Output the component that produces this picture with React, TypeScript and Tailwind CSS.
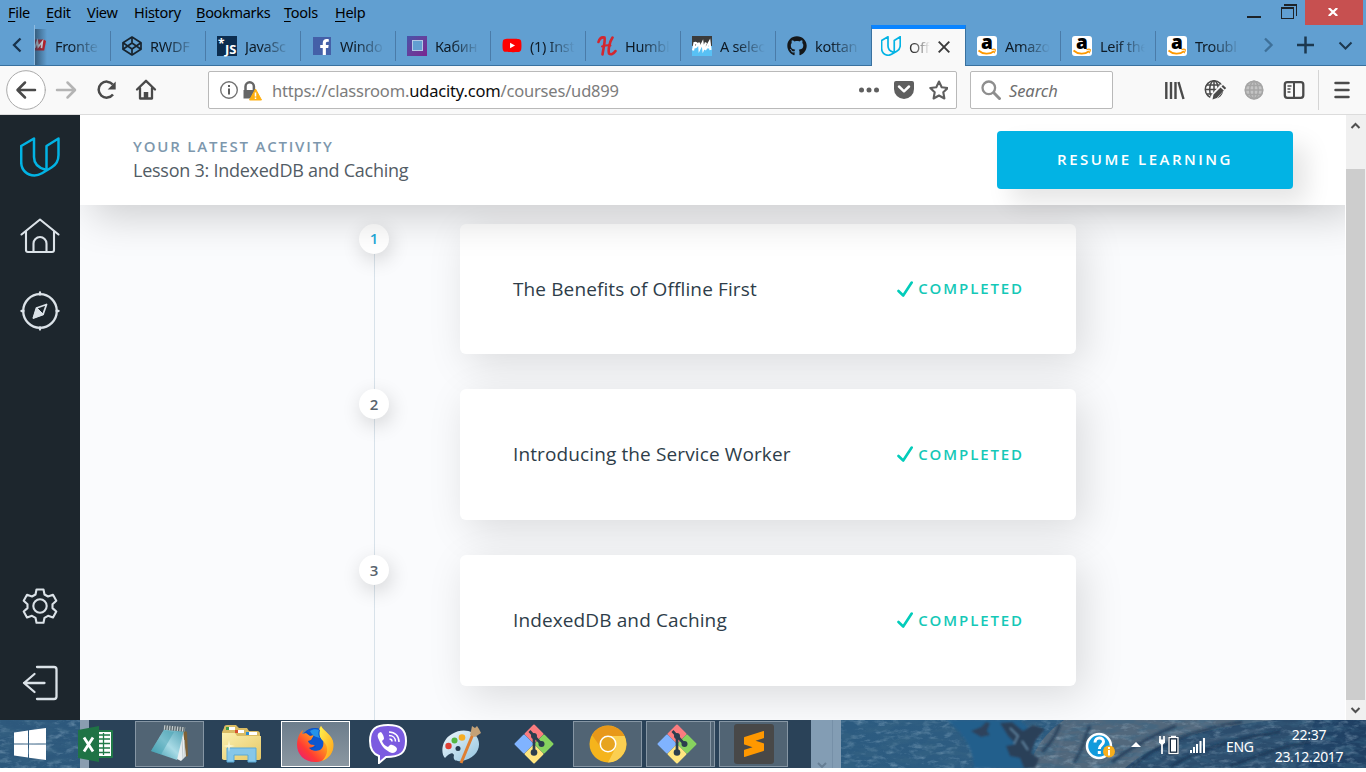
import React from "react";
import { FaFacebookF, FaYoutube, FaGithub } from "react-icons/fa";
import { SiSublimetext } from "react-icons/si";

const menu = [
  { k: "F", pre: "", post: "ile", w: "w-[38px]" },
  { k: "E", pre: "", post: "dit", w: "w-[41px]" },
  { k: "V", pre: "", post: "iew", w: "w-[47px]" },
  { k: "s", pre: "Hi", post: "tory", w: "w-[62px]" },
  { k: "B", pre: "", post: "ookmarks", w: "w-[88px]" },
  { k: "T", pre: "", post: "ools", w: "w-[51px]" },
  { k: "H", pre: "", post: "elp", w: "w-[50px]" },
];

function UdacityMark({ className, sw }: { className: string; sw: number }) {
  return (
    <svg viewBox="0 0 40 40" className={className} fill="none" stroke="#02b3e4" strokeWidth={sw} strokeLinejoin="round" strokeLinecap="round">
      <path d="M1.200 9 14 1.500V20c0 6 4 10.500 11 12.500M1.200 9v16C1.200 33 7 38.500 14.500 38.500c3 0 5-.800 7.500-2.300l9.500-5.700c5-3 7-7 7-12.500V1.500L26.500 9v22" />
    </svg>
  );
}

function Codepen() {
  return (
    <svg viewBox="0 0 20 20" className="h-5 w-5" fill="none" stroke="#17232d" strokeWidth="1.7" strokeLinejoin="round">
      <path d="M10 1 19 6.800v6.400L10 19 1 13.200V6.800z" />
      <path d="M10 1v6M10 13v6M1 6.800l9 6.200 9-6.200M1 13.200 10 7l9 6.200" />
    </svg>
  );
}

function Amazon() {
  return (
    <span className="relative flex h-5 w-5 justify-center rounded-[3px] bg-white">
      <span className="font-['Open_Sans',sans-serif] text-[19px] leading-[13px] font-extrabold text-black">a</span>
      <svg viewBox="0 0 20 20" className="absolute inset-0" fill="none" stroke="#ff9900" strokeWidth="1.700">
        <path d="M1.500 14.500c4.500 4 11 4.200 15.500.800" />
        <path d="M14.500 13.600c1.500-.500 3-.600 3.700-.200.300.800-.200 2.600-1.200 3.800" strokeWidth="1.200" />
      </svg>
    </span>
  );
}

const favicons: Record<string, React.ReactNode> = {
  codepen: <Codepen />,
  js: (
    <span className="relative block h-5 w-5 bg-[#0c2d4f] text-white">
      <span className="absolute right-[0.500px] bottom-[-2px] font-['Open_Sans',sans-serif] text-[13px] leading-[18px] font-bold">JS</span>
      <span className="absolute top-[1px] left-[1px] font-['Open_Sans',sans-serif] text-[12px] leading-[14px] font-bold">*</span>
    </span>
  ),
  facebook: (
    <span className="flex h-[18px] w-[18px] items-end justify-center overflow-hidden bg-[#4460a8] text-white">
      <FaFacebookF className="ml-1 h-[16px] w-[13px]" />
    </span>
  ),
  square: (
    <span className="flex h-5 w-5 items-center justify-center bg-linear-to-br from-[#4553a8] to-[#7a2290]">
      <span className="h-[11px] w-[11px] border border-[#b3c9e6] bg-[#629fd1]" />
    </span>
  ),
  youtube: (
    <span className="relative flex h-5 w-5 items-center justify-center">
      <span className="absolute h-2 w-2 bg-white" />
      <FaYoutube className="relative h-[21px] w-[20px] text-[#ff0000]" />
    </span>
  ),
  humble: (
    <svg viewBox="0 0 20 20" className="h-5 w-5" fill="none" stroke="#d3262e" strokeLinecap="round">
      <path d="M1.500 6C2.500 2 5 1 7.500 1.500 8.500 5 6 14 5.500 18.500" strokeWidth="2.600" />
      <path d="M15.500 1.500C12.500 6 11 14 12 17.500c1.700 1.500 4.500.500 6.500-2.500" strokeWidth="2.600" />
      <path d="M5 10.500c3-1 6-1.500 8.500-1" strokeWidth="2" />
    </svg>
  ),
  pwa: (
    <span className="relative flex h-5 w-5 flex-col">
      <span className="h-[10px] bg-[#3b3b3b]" />
      <span className="h-[10px] bg-[#58c1f5]" />
      <svg viewBox="0 0 20 20" className="absolute inset-0" fill="none" stroke="#fff" strokeWidth="2.200">
        <path d="M1 14.500 2.500 7c4-.500 3.500 3.500 0 4.500M7 6.500 7.500 13 10.500 7l.800 6L14 6.500M13 14l4.500-8L18.500 14M14.500 11.500h4" />
      </svg>
    </span>
  ),
  github: <FaGithub className="h-5 w-5 text-[#14171a]" />,
  amazon: <Amazon />,
};

const tabsLeft = [
  { icon: "codepen", title: "RWDF" },
  { icon: "js", title: "JavaSc" },
  { icon: "facebook", title: "Windo" },
  { icon: "square", title: "Кабин" },
  { icon: "youtube", title: "(1) Inst" },
  { icon: "humble", title: "Humbl" },
  { icon: "pwa", title: "A selec" },
  { icon: "github", title: "kottan" },
];
const tabsRight = ["Amazo", "Leif the", "Troubl"];

const fade = "mt-[3px] whitespace-nowrap [mask-image:linear-gradient(to_right,#000_35%,transparent_100%)]";

function Tab({ icon, title, line }: { icon: string; title: string; line: boolean }) {
  return (
    <div className="relative flex h-full w-[95px] items-center pl-[11px]">
      {line && <span className="absolute top-[6px] right-0 h-[30px] w-px bg-[#4a7ba8]" />}
      <span className="mt-px flex w-5 shrink-0 justify-center">{favicons[icon]}</span>
      <span className={`ml-2 w-[45px] text-[14.500px] tracking-[-0.300px] text-[#0e1a25] ${fade}`}>{title}</span>
    </div>
  );
}

function TitleAndTabs() {
  return (
    <div className="flex h-[66px] flex-col border-b border-[#39719f] bg-[#619fd1]">
      <div className="flex h-[25px] items-start justify-between">
        <div className="flex h-[25px] items-center pl-2 text-[14.500px] tracking-[-0.300px] text-black">
          {menu.map((m) => (
            <span key={m.k} className={`${m.w} whitespace-nowrap`}>
              {m.pre}
              <span className="underline decoration-1 underline-offset-[3px]">{m.k}</span>
              {m.post}
            </span>
          ))}
        </div>
        <div className="flex h-[25px] pr-[3px]">
          <svg viewBox="0 0 60 25" className="h-[25px] w-[60px]" fill="none" stroke="#1d2328" shapeRendering="crispEdges">
            <path d="M2 17h14" strokeWidth="2" />
            <path d="M36.500 8.500h12v9.500h-12zM36 8h13M39 4.500h12V16" strokeWidth="1" />
            <path d="M36 8h13M39 5h12" strokeWidth="2" />
          </svg>
          <div className="flex w-[58px] items-center justify-center bg-[#c75050]">
            <svg viewBox="0 0 10 8" className="mb-[2px] mr-[2px] h-2 w-[10px]" fill="none" stroke="#fff" strokeWidth="2.200">
              <path d="m.800 0 8.400 8M9.200 0 .800 8" />
            </svg>
          </div>
        </div>
      </div>
      <div className="flex h-10">
        <div className="flex w-[35px] items-center justify-center border-r border-[#8fbbe0]">
          <svg viewBox="0 0 10 16" className="h-4 w-[10px]" fill="none" stroke="#17324c" strokeWidth="2.300"><path d="M8.500 1.500 2 8l6.500 6.500" /></svg>
        </div>
        <div className="relative flex w-[76px] items-center">
          <span className="absolute top-[6px] right-0 h-[30px] w-px bg-[#4a7ba8]" />
          <svg viewBox="0 0 12 20" className="h-5 w-3 pr-px">
            <path d="M0 4h9.500L12 5.500 10 16H0z" fill="#cc1a22" />
            <path d="M0 13 2.500 6 3.500 12 8 6.500 7 13.500" fill="none" stroke="#fff" strokeWidth="1.800" />
          </svg>
          <span className="absolute top-1 bottom-0 left-0 w-3 bg-linear-to-r from-[#24425c]/70 to-transparent" />
          <span className={`ml-2 w-[45px] text-[14.500px] tracking-[-0.300px] text-[#0e1a25] ${fade}`}>Fronte</span>
        </div>
        {tabsLeft.map((t, i) => <Tab key={t.title} icon={t.icon} title={t.title} line={i < 7} />)}
        <div className="-mb-px flex h-[41px] w-[95px] items-center border-x border-t-[4px] border-x-[#39719f] border-t-[#0a84ff] bg-[#f9f9f9] pl-[9px]">
          <UdacityMark className="mb-[3px] h-5 w-5 shrink-0" sw={3.4} />
          <span className="ml-2 w-[21px] whitespace-nowrap text-[14.500px] tracking-[-0.300px] text-[#333] [mask-image:linear-gradient(to_right,#000_20%,transparent_100%)]">Off</span>
          <svg viewBox="0 0 12 12" className="mb-[2px] ml-2 h-3 w-3" stroke="#3a3a3a" strokeWidth="1.900"><path d="m.700.700 10.600 10.600M11.300.700.700 11.300" /></svg>
        </div>
        {tabsRight.map((t, i) => <Tab key={t} icon="amazon" title={t} line={i < 2} />)}
        <div className="flex flex-1 items-center pl-3">
          <svg viewBox="0 0 100 40" className="h-10 w-[100px]" fill="none" stroke="#1c384f" strokeWidth="2.300">
            <path d="m2 13.500 6.500 6.500L2 26.500" stroke="#3e7099" />
            <path d="M42.500 11.500v17M34 20h17" strokeWidth="2.500" />
            <path d="m76.500 17.500 6 6 6-6" strokeWidth="2" />
          </svg>
        </div>
      </div>
    </div>
  );
}

function Globe({ color }: { color: string }) {
  return (
    <g fill="none" stroke={color} strokeWidth="1.500">
      <circle cx="10" cy="10" r="8.700" />
      <ellipse cx="10" cy="10" rx="4.300" ry="8.700" />
      <path d="M10 1v18M1 10h18M2.500 5.500h15M2.500 14.500h15" />
    </g>
  );
}

function Toolbar() {
  return (
    <div className="flex h-[49px] items-center border-b border-[#dcdcdc] bg-[#f9f9f9]">
      <svg viewBox="0 0 208 48" className="h-12 w-[208px]" fill="none" stroke="#4a4a4a" strokeWidth="2.500" strokeLinecap="round" strokeLinejoin="round">
        <circle cx="26" cy="24" r="19.300" fill="#fff" stroke="#aaa" strokeWidth="1" />
        <path d="M35 24H18M25 16.500 17.500 24l7.500 7.500" />
        <path d="M57 24h17M67.500 16.500 75 24l-7.500 7.500" stroke="#b4b4b4" />
        <path d="M112.800 18.500A8 8 0 1 0 113 28.500" strokeLinecap="butt" />
        <path d="M115.700 15.500v8h-8z" fill="#4a4a4a" stroke="none" />
        <path d="m137 23.500 9-8.700 9 8.700M140 22v10.500h12V22" strokeWidth="2.300" />
        <path d="M146 32v-6" strokeWidth="4.500" strokeLinecap="butt" />
      </svg>
      <div className="flex h-[38px] w-[749px] items-center rounded-[2px] border border-[#b9b9b9] bg-white">
        <svg viewBox="0 0 62 36" className="h-9 w-[62px]">
          <circle cx="20" cy="18" r="8.300" fill="none" stroke="#737373" strokeWidth="1.400" />
          <path d="M20 16.500v6M20 13v2" stroke="#5e5e5e" strokeWidth="2" />
          <path d="M36.500 19v-4.500a4.200 4.200 0 0 1 8.400 0V18" fill="none" stroke="#666" strokeWidth="2.500" />
          <path d="M34.500 18h12v8.500h-12z" fill="#666" />
          <path d="m46.500 17 6 11h-12z" fill="#ffb010" stroke="#ffb010" strokeLinejoin="round" />
          <path d="M46.500 20.500v4M46.500 25.500v1.500" stroke="#fff" strokeWidth="1.500" />
        </svg>
        <span className="mt-[2px] ml-[1px] whitespace-nowrap text-[16.500px] tracking-[-0.180px] text-[#7c7c7c]">
          https://classroom.<span className="text-[#0c0c0d]">udacity.com</span>/courses/ud899
        </span>
        <svg viewBox="0 0 100 36" className="ml-auto h-9 w-[100px]">
          <g fill="#5f5f5f">
            <circle cx="13.500" cy="18" r="2.500" /><circle cx="21" cy="18" r="2.500" /><circle cx="28.500" cy="18" r="2.500" />
            <path d="M48 9h16a2 2 0 0 1 2 2v6a10 10 0 0 1-20 0v-6a2 2 0 0 1 2-2z" />
          </g>
          <path d="m51 14.500 5 4.800 5-4.800" fill="none" stroke="#fff" strokeWidth="2.500" strokeLinecap="round" strokeLinejoin="round" />
          <path d="m91 9.500 2.700 5.700 6 .800-4.400 4.300 1.100 6.200-5.400-3-5.400 3 1.100-6.200-4.400-4.300 6-.800z" fill="none" stroke="#5f5f5f" strokeWidth="2.100" strokeLinejoin="round" />
        </svg>
        <span className="w-[8px]" />
      </div>
      <div className="ml-[13px] flex h-[38px] w-[143px] items-center rounded-[2px] border border-[#b9b9b9] bg-white pl-[10px]">
        <svg viewBox="0 0 20 20" className="h-5 w-5" fill="none" stroke="#8e8e8e"><circle cx="7.800" cy="7.800" r="6.300" strokeWidth="2.300" /><path d="m12.500 12.500 7 7" strokeWidth="3" /></svg>
        <span className="mt-[2px] ml-2 text-[16.500px] tracking-[-0.100px] text-[#6e6e6e] italic">Search</span>
      </div>
      <svg viewBox="0 0 253 48" className="h-12 w-[253px]" fill="none" stroke="#4a4a4a">
        <path d="M53.300 16v17M58 16v17M62.500 16v17" strokeWidth="2.400" />
        <path d="m65.500 16 5 17" strokeWidth="2.400" />
        <g transform="translate(91 13.500)"><Globe color="#4a4a4a" /></g>
        <path d="m96 34 3-6 9-10 5 4-10 12z" fill="#f9f9f9" stroke="none" />
        <path d="m100.500 28.500 7-7 3.300 3-7 7.500-4.300 1.500zM108.500 20.500l1.500-1.500 3.200 3-1.500 1.600z" fill="#4a4a4a" stroke="none" />
        <circle cx="141" cy="24" r="9.500" fill="#c4c4c4" stroke="none" />
        <g transform="translate(131 14)"><Globe color="#a5a5a5" /></g>
        <rect x="171.800" y="16.200" width="18.500" height="15.600" rx="2.500" strokeWidth="2.300" />
        <path d="M181 16v16" strokeWidth="2" />
        <path d="M174.500 20h4M174.500 23h3M174.500 26h3" strokeWidth="1.300" />
        <path d="M205.500 4v40" stroke="#d5d5d5" />
        <path d="M222.500 17h13M222.500 24h13M222.500 31h13" strokeWidth="2.500" strokeLinecap="round" />
      </svg>
    </div>
  );
}

function Sidebar() {
  return (
    <nav className="flex w-20 flex-col items-center justify-between bg-[#1d262d] pt-[22px] pr-px pb-[17px]">
      <div className="flex flex-col items-center">
        <UdacityMark className="h-10 w-10" sw={2.5} />
        <svg viewBox="0 0 40 40" className="mt-[39px] h-10 w-10" fill="none" stroke="#dbe2e8" strokeWidth="2.100" strokeLinecap="round" strokeLinejoin="round">
          <path d="M1.500 18.500 20 3.500l18.500 15M6 15.500V34q0 2 2 2h24q2 0 2-2V15.500" />
          <path d="M13.500 36V27.500a6.500 6.500 0 0 1 13 0V36" />
        </svg>
        <svg viewBox="0 0 40 40" className="mt-[35px] h-10 w-10" fill="none" stroke="#dbe2e8" strokeWidth="2.300" strokeLinecap="round" strokeLinejoin="round">
          <circle cx="20" cy="20" r="16.800" />
          <path d="M20 1.500v2M20 36.500v2M1.500 20h2M36.500 20h2" />
          <path d="m26.500 13.500-3.500 10-9.500 3.500 3-10z" strokeWidth="1.800" />
          <path d="m17 17 6.500 6.500-10 3.500z" fill="#dbe2e8" strokeWidth="1" />
        </svg>
      </div>
      <div className="flex flex-col items-center">
        <svg viewBox="0 0 40 40" className="h-10 w-10" fill="none" stroke="#dbe2e8" strokeWidth="2.100" strokeLinejoin="round">
          <path d="M16.500 3.500h7l1 5 3.500 2 5-1.700 3.300 6-3.800 3.500v3.800l3.800 3.400-3.300 6-5-1.700-3.500 2-1 5h-7l-1-5-3.500-2-5 1.700-3.300-6 3.800-3.400v-3.800l-3.800-3.500 3.300-6 5 1.700 3.500-2z" />
          <circle cx="20" cy="20" r="6.700" />
        </svg>
        <svg viewBox="0 0 40 40" className="mt-[37px] h-10 w-10" fill="none" stroke="#dbe2e8" strokeWidth="2.300" strokeLinecap="round" strokeLinejoin="round">
          <path d="M17 4h17q2.500 0 2.500 2.500v27Q36.500 36 34 36H17M24.500 20H4M14.500 11 4 20l10.500 9" />
        </svg>
      </div>
    </nav>
  );
}

const lessons = ["The Benefits of Offline First", "Introducing the Service Worker", "IndexedDB and Caching"];

function Lessons() {
  return (
    <div className="relative flex flex-1 flex-col gap-[35px] pt-[18.700px] pl-[279px]">
      <span className="absolute top-[19px] bottom-0 left-[294px] w-px bg-[#d8e2ea]" />
      {lessons.map((title, i) => (
        <div key={title} className="flex h-[130.700px] shrink-0 items-start">
          <span className={`relative flex h-[30px] w-[30px] items-center justify-center rounded-full bg-white text-[15px] font-semibold shadow-[2px_6px_20px_rgba(0,0,0,0.160)] ${i === 0 ? "text-[#1fa9d9]" : "text-[#58646d]"}`}>
            {i + 1}
          </span>
          <div className="ml-[71px] flex h-full w-[616px] items-center justify-between rounded-md bg-white pr-[52px] pl-[53px] shadow-[8px_10px_40px_rgba(0,0,0,0.130)]">
            <span className="text-[19px] tracking-[0.120px] text-[#2e3d49]">{title}</span>
            <span className="mb-px flex items-center gap-[5px] text-[15px] font-semibold tracking-[1.900px] text-[#15c8b7]">
              <svg viewBox="0 0 16 16" className="h-4 w-4" fill="none" stroke="#02ccba" strokeWidth="2.600" strokeLinecap="round" strokeLinejoin="round"><path d="m1.500 10 4.700 4.500L14.700 1.500" /></svg>
              COMPLETED
            </span>
          </div>
        </div>
      ))}
    </div>
  );
}

function Classroom() {
  return (
    <div className="flex h-[605px] overflow-hidden font-['Open_Sans',sans-serif]">
      <Sidebar />
      <main className="flex w-[1265px] flex-col overflow-hidden bg-[#fafbfd]">
        <header className="relative z-10 flex h-[90px] shrink-0 items-center justify-between bg-white pr-[52px] pl-[53px] shadow-[12px_12px_40px_rgba(0,0,0,0.180)]">
          <div className="mb-[2px] flex flex-col">
            <span className="text-[15px] leading-[22px] font-semibold tracking-[1.800px] text-[#7d97ad]">YOUR LATEST ACTIVITY</span>
            <span className="text-[18px] leading-[26px] tracking-[-0.250px] text-[#525c65]">Lesson 3: IndexedDB and Caching</span>
          </div>
          <button className="flex h-[58px] w-[296px] items-center justify-center rounded bg-[#02b3e4] pb-px text-[15px] font-semibold tracking-[2.500px] text-white shadow-[14px_14px_24px_rgba(0,0,0,0.100)]">RESUME LEARNING</button>
        </header>
        <Lessons />
      </main>
      <div className="flex w-[21px] flex-col border-l border-white bg-[#f0f0f0]">
        <svg viewBox="0 0 20 54" className="h-[54px] w-5 shrink-0" fill="none" stroke="#505050" strokeWidth="2"><path d="m5.500 13 4-4 4 4" /></svg>
        <div className="mr-px flex-1 bg-[#cdcdcd]" />
        <svg viewBox="0 0 20 20" className="h-5 w-5 shrink-0" fill="none" stroke="#505050" strokeWidth="2"><path d="m5.500 8 4 4 4-4" /></svg>
      </div>
    </div>
  );
}

function Wallpaper() {
  return (
    <svg viewBox="0 0 1366 48" className="absolute inset-0 h-12 w-[1366px]">
      <defs>
        <linearGradient id="sky" x1="0" x2="1"><stop offset="0" stopColor="#2d587c" /><stop offset=".620" stopColor="#2c5b80" /><stop offset=".750" stopColor="#2e5d82" /><stop offset="1" stopColor="#1f3f62" /></linearGradient>
        <filter id="rock" x="0" y="0" width="100%" height="100%">
          <feTurbulence type="fractalNoise" baseFrequency=".05 .160" numOctaves="5" seed="4" />
          <feColorMatrix values="0 0 0 0 .04  0 0 0 0 .13  0 0 0 0 .23  0 4 0 0 -1.750" />
        </filter>
        <filter id="grain" x="0" y="0" width="100%" height="100%">
          <feTurbulence type="fractalNoise" baseFrequency=".090 .200" numOctaves="4" seed="9" />
          <feColorMatrix values="0 0 0 0 .45  0 0 0 0 .62  0 0 0 0 .75  0 3 0 0 -1.500" />
        </filter>
        <filter id="soft"><feGaussianBlur stdDeviation="1" /></filter>
      </defs>
      <rect width="1366" height="48" fill="url(#sky)" />
      <path d="M1064 0h215l-60 12-80 36H1030c2-18 16-36 34-48z" fill="#52687c" />
      <path d="M1125 48c30-26 80-40 150-48h40l-20 48z" fill="#2c4d6d" />
      <rect width="1366" height="48" filter="url(#grain)" opacity=".350" />
      <rect width="1366" height="48" filter="url(#rock)" opacity=".450" />
      <g filter="url(#soft)">
        <path d="M947 0h72l18 14-12 24 2 10h-53c0-20-12-36-27-48z" fill="#235f8c" />
        <path d="m971 11 10-4 5-5 4 1-3 8 3 4-9 2z" fill="#2d435b" />
        <path d="m1000 3 12-1 11 9 10-6 12 4-10 12-4 12 8 6-4 9h-11l-4-10-10-2-4-10 10-2-8-8z" fill="#2a4058" />
        <path d="m1010 8 8 8-4 8M1028 30l-6-9" fill="none" stroke="#6488a5" strokeWidth="1.500" />
        <g fill="none" stroke="#14304e" strokeWidth="3" opacity=".650">
          <path d="M1132 48c20-22 60-38 110-46M1112 42c20-16 40-26 64-36M1170 48c24-18 60-28 110-36M1060 4c-4 12-10 20-18 28M1230 46c24-8 50-20 80-24M1090 6c-6 10-4 20-16 36" />
        </g>
        <g fill="none" stroke="#6d8297" strokeWidth="1.500" opacity=".500">
          <path d="M1128 42c20-18 46-30 84-40M1160 46c20-18 50-28 100-36M1055 44c2-16 8-30 20-42" />
        </g>
      </g>
    </svg>
  );
}

function GitIcon() {
  return (
    <svg viewBox="0 0 40 40" className="h-10 w-10">
      <g strokeLinejoin="round" strokeWidth="2">
        <path d="m20 1.500 8.500 8.500L20 18.500 11.500 10z" fill="#fb7c7f" stroke="#fb7c7f" />
        <path d="m10 11.500 8.500 8.500L10 28.500 1.500 20z" fill="#80b3ff" stroke="#80b3ff" />
        <path d="m30 11.500 8.500 8.500L30 28.500 21.500 20z" fill="#87d35f" stroke="#87d35f" />
        <path d="m20 21.500 8.500 8.500L20 38.500 11.500 30z" fill="#ffe680" stroke="#ffe680" />
      </g>
      <path d="M15.500 7 20 12v16M20 12l7 7.500" fill="none" stroke="#2b3e4e" strokeWidth="2.700" />
      <g fill="#2b3e4e"><circle cx="20" cy="12" r="3" /><circle cx="27.500" cy="20" r="3" /><circle cx="20" cy="28.500" r="3.300" /></g>
    </svg>
  );
}

function NotepadIcon() {
  return (
    <svg viewBox="0 0 40 40" className="h-10 w-10">
      <defs><linearGradient id="np" x1="0" y1="1" x2="1" y2="0"><stop offset="0" stopColor="#2f93a8" /><stop offset=".500" stopColor="#a9dbe6" /><stop offset="1" stopColor="#4a9db0" /></linearGradient></defs>
      <path d="m33 6 4 2 1 24-6 2z" fill="#7d6136" />
      <path d="m33 6 3 26-5 5-6-3z" fill="#e8eef0" />
      <path d="m32 14 1 21M34.500 16l.500 17" stroke="#aeb9bd" strokeWidth=".700" />
      <path d="M15 4 34 6 27 36 1 27z" fill="url(#np)" />
      <path d="M14 6 1 27l10 3.500L24 8z" fill="#3d9bad" opacity=".450" />
      <path d="m14 3.500 21 2" stroke="#59676c" strokeWidth="4.500" />
      <path d="m14 3.500 21 2" stroke="#c5cdd0" strokeWidth="4.500" strokeDasharray="1.200 1.400" />
    </svg>
  );
}

function FolderIcon() {
  return (
    <svg viewBox="0 0 40 40" className="h-10 w-10">
      <defs><linearGradient id="fo" x1="0" y1="0" x2="1" y2="1"><stop offset="0" stopColor="#fbefae" /><stop offset="1" stopColor="#e6c866" /></linearGradient></defs>
      <path d="M3 4q0-3 3-3h9l3 3h8l2 3h8q3 0 3 3v25H1V8z" fill="#d9bb64" />
      <path d="M5 3h9v3H5zM14 6h9v3h-9zM25 8h11v3H25z" fill="#fff" />
      <path d="M5 3h3v3H5z" fill="#3c9d49" /><path d="M14 6h3v3h-3z" fill="#d9502f" /><path d="M25 8h3v3h-3z" fill="#2e8dd0" />
      <path d="M1 9h13l2 3h24v22q0 2-2 2H3q-2 0-2-2z" fill="url(#fo)" />
      <path d="M6 24h29v14h-8v-7H13v7H6z" fill="#86c7ea" stroke="#5aa9d6" />
      <path d="m7 21 1-5 1 5 5 1-5 1-1 5-1-5-5-1z" fill="#fffbe0" opacity=".800" />
    </svg>
  );
}

function FirefoxIcon() {
  return (
    <svg viewBox="0 0 40 40" className="h-10 w-10">
      <defs>
        <linearGradient id="fx" x1="1" y1="0" x2="0" y2="1"><stop offset="0" stopColor="#fff14f" /><stop offset=".400" stopColor="#ff9a1e" /><stop offset=".700" stopColor="#ff3b33" /><stop offset="1" stopColor="#e31587" /></linearGradient>
        <linearGradient id="fy" x1="0" y1="0" x2="1" y2="1"><stop offset="0" stopColor="#fff44f" /><stop offset="1" stopColor="#ff9d18" /></linearGradient>
      </defs>
      <circle cx="19" cy="19" r="15" fill="#0a4fc4" />
      <path d="M7 6 6 10 10 9l4 3 4-1-3 5-3 1c1 4 5 2 7 4-2 3-5 2-6 3 5 5 13 2 14-5 3-8-4-10-4-14L25 2c2 4 11 9 12 18 1 10-7 18-18 18S1 30 1 21C1 15 3 9 7 6z" fill="url(#fx)" />
      <path d="M25 2c1 5 12 8 12.500 18C38 29 32 35 26 37c6-6 7-14 2-19-5-4-6-9-3-16z" fill="url(#fy)" />
      <path d="M11 7c4-3 9-3 13-1-2 5 0 9 3 11 1 4 0 7-3 9-3 1-7 1-9-1 2-1 4-1 5-3-3-2-6 0-7-4l3-2 3-5c-4 0-7-1-8-4z" fill="#0d57cf" />
      <path d="M14 7c3-2 6-2 9-1-1 3-1 6 1 8-5-1-8-3-10-7z" fill="#2393ea" />
    </svg>
  );
}

function PaletteIcon() {
  return (
    <svg viewBox="0 0 40 40" className="h-10 w-10">
      <defs><linearGradient id="pa" x1="0" y1="0" x2="1" y2="1"><stop offset="0" stopColor="#f0f8fc" /><stop offset="1" stopColor="#93c4df" /></linearGradient></defs>
      <path d="M4 34C-1 29 1 15 11 10c10-6 22-4 26 5 4 10-4 20-16 22-8 1-9-2-8-6-2-4-6 0-9 3z" fill="url(#pa)" />
      <circle cx="7.500" cy="22" r="3.200" fill="#dd3d33" /><circle cx="13.500" cy="16.500" r="3" fill="#55b642" /><circle cx="21" cy="13.500" r="3.300" fill="#f5ad22" /><circle cx="17" cy="24.500" r="2.500" fill="#243b50" />
      <path d="M32 10 20 39" stroke="#df7f32" strokeWidth="3" />
      <path d="m29 11 1-4 1-5 3 2 2-2 2 3 2 4-6 4z" fill="#c5a277" />
    </svg>
  );
}

function CanaryIcon() {
  return (
    <svg viewBox="0 0 40 40" className="h-10 w-10">
      <circle cx="20" cy="20" r="18.500" fill="#f5b41c" />
      <path d="M4 11A18.500 18.500 0 0 1 36.500 12H20a8 8 0 0 0-7.500 11z" fill="#e8981a" />
      <path d="M20 12h16.500A18.500 18.500 0 0 1 20 38.500l7.500-14.500c2-4 0-10-7.500-12z" fill="#fbcf51" />
      <circle cx="20" cy="20" r="8.500" fill="#fff" /><circle cx="20" cy="20" r="7" fill="#e7a420" />
    </svg>
  );
}

function ExcelIcon() {
  return (
    <svg viewBox="0 0 36 36" className="h-9 w-9">
      <rect x="17" y="4" width="18" height="28" rx="1" fill="#207a48" />
      <rect x="19" y="6" width="14" height="24" fill="#fff" />
      <path d="M20 9h12M20 13h12M20 17.500h12M20 22h12M20 26.500h12M25.500 7v22" stroke="#207a48" strokeWidth="1.300" />
      <path d="M0 4 21 0v36L0 32z" fill="#1f7345" />
      <path d="m6 11.500 9 14M15 11.500l-9 14" stroke="#fff" strokeWidth="2.800" />
    </svg>
  );
}

const frame = "border border-[#8696a4] bg-[#516474]";

function Taskbar() {
  return (
    <div className="relative h-12 shrink-0 overflow-hidden">
      <Wallpaper />
      <div className="relative flex h-12">
        <div className="flex w-20 items-center pb-px pl-[14px]">
          <svg viewBox="0 0 32 32" className="h-8 w-8" fill="#fff"><path d="M0 4.500 14 2.500V15.500H0zM15 2.300 32 0v15.500H15zM0 16.500h14v13L0 27.500zM15 16.500h17V32l-17-2.300z" /></svg>
        </div>
        <div className="w-[9px] bg-[#8a9db0]" />
        <div className="flex w-[722px] bg-[#2a4258]">
          <div className="-ml-[11px] flex w-[57px] items-center"><ExcelIcon /></div>
          <div className={`mt-px flex h-[46px] w-[69px] items-center justify-center ${frame}`}><NotepadIcon /></div>
          <div className="flex w-[77px] items-center justify-center pr-[3px]"><FolderIcon /></div>
          <div className="mt-px flex h-[46px] w-[69px] items-center justify-center border border-white bg-linear-to-b from-[#6c7d8c] to-[#8b97a1]"><FirefoxIcon /></div>
          <div className="flex w-[76px] items-center justify-center">
            <svg viewBox="0 0 40 40" className="h-10 w-10">
              <path d="M20 1C8 1 2 5 2 17c0 8 3 13 9 15v7l7-6c14 0 20-4 20-16S32 1 20 1z" fill="#7b5be0" stroke="#fff" strokeWidth="2" />
              <path d="M13 8c-4 1-4 4-2 8 3 7 7 11 13 13 3 0 5-2 5-4 0-2-5-5-7-4l-2 2c-3-1-5-3-6-6l2-2c0-2-1-5-3-7z" fill="#fff" />
              <path d="M21 8c6 0 10 4 10 10M21 11.500c4 0 6.500 2.500 6.500 6M21.500 15c1.500 0 2.500 1 2.500 2.500" fill="none" stroke="#fff" strokeWidth="1.500" />
            </svg>
          </div>
          <div className="flex w-[70px] items-center justify-center"><PaletteIcon /></div>
          <div className="flex w-[77px] items-center justify-center pr-px"><GitIcon /></div>
          <div className={`mt-px flex h-[46px] w-[69px] items-center justify-center ${frame}`}><CanaryIcon /></div>
          <div className={`mt-px ml-1 flex h-[46px] w-[65px] items-center justify-center pr-1 ${frame}`}><GitIcon /></div>
          <div className={`mt-px h-[46px] w-[4px] border-l-0 ${frame}`} />
          <div className={`mt-px ml-1 flex h-[46px] w-[69px] items-center justify-center ${frame}`}>
            <span className="flex h-10 w-10 items-center justify-center rounded-[3px] bg-[#484848]"><SiSublimetext className="h-[26px] w-[26px] text-[#ff9800]" /></span>
          </div>
        </div>
        <div className="relative flex w-[30px] items-end justify-center bg-[#839db4]">
          <span className="absolute top-0 right-2 h-12 w-px bg-[#7690a8]" />
          <svg viewBox="0 0 10 6" className="mr-2 h-[6px] w-[10px]" fill="none" stroke="#667e94" strokeWidth="2"><path d="m1 1 4 4 4-4" /></svg>
        </div>
        <svg viewBox="0 0 385 48" className="h-12 w-[385px]">
          <circle cx="258" cy="26" r="12" fill="#129bdc" stroke="#fff" strokeWidth="2.500" />
          <path d="M254 22.500c0-6 8.500-6 8.500-.700 0 3-4.200 3.300-4.200 7.200M258.300 31v3" fill="none" stroke="#fff" strokeWidth="3" />
          <circle cx="268" cy="31.500" r="6" fill="#f7ae1c" /><path d="M268 30v5.500M268 27v2" stroke="#fff" strokeWidth="2" />
          <path d="m290 27 5-5 5 5z" fill="#fff" />
          <rect x="328.500" y="18" width="8" height="15" fill="#fff" stroke="#16283c" strokeWidth="3" />
          <rect x="328" y="17.500" width="9" height="16" fill="none" stroke="#fff" strokeWidth="1.300" />
          <path d="M330 16.500h5M319 16v4M323 16v4M321 24v10" stroke="#fff" strokeWidth="1.700" /><path d="M318 19.500h6v3l-2 2h-2l-2-2z" fill="#fff" />
          <g fill="#fff"><path d="M349 30h2v3h-2zM352 27h2v6h-2zM355 24h2v9h-2zM358.500 21h2v12h-2zM362 18h2v15h-2z" /></g>
        </svg>
        <span className="flex w-[32px] items-center pt-1 text-[14px] tracking-[-0.300px] text-white">ENG</span>
        <div className="flex w-[102px] flex-col items-center pt-[4px] text-[14px] leading-[22px] tracking-[-0.300px] text-white">
          <span>22:37</span>
          <span>23.12.2017</span>
        </div>
      </div>
    </div>
  );
}

export default function App() {
  return (
    <div className="flex h-[772px] w-[1366px] flex-col overflow-hidden bg-white font-['Noto_Sans',sans-serif]">
      <TitleAndTabs />
      <Toolbar />
      <Classroom />
      <Taskbar />
    </div>
  );
}
